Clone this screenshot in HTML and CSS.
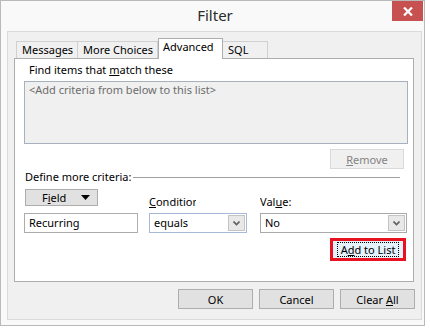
FILE: index.html
```html
<!DOCTYPE html>
<html>
<head>
<meta charset="utf-8">
<link rel="stylesheet" href="styles.css">
</head>
<body>
<div class="window">
  <div class="titlebar">
    <span class="title">Filter</span>
    <span class="close"><svg width="10" height="9" viewBox="0 0 10 9"><path d="M1 0.5 L9 8.5 M9 0.5 L1 8.5" stroke="#fff" stroke-width="2.2"/></svg></span>
  </div>
  <div class="client">
    <div class="tabs">
      <div class="tab t-msg">Messages</div>
      <div class="tab t-more">More Choices</div>
      <div class="tab t-adv active">Advanced</div>
      <div class="tab t-sql">SQL</div>
    </div>
    <div class="pane">
      <div class="find-label">Find items that <u>m</u>atch these</div>
      <div class="listbox">&lt;Add criteria from below to this list&gt;</div>
      <div class="remove-row"><div class="btn disabled remove"><span><u>R</u>emove</span></div></div>
      <div class="define-row"><span class="define-label">Define more criteria:</span><span class="rule"></span></div>
      <div class="criteria">
        <div class="btn field-btn"><span>F<u>i</u>eld</span><svg width="9" height="5" viewBox="0 0 9 5"><path d="M0 0 H9 L4.5 5 Z" fill="#000"/></svg></div>
        <div class="crit-label cond-label"><u>C</u>ondition</div>
        <div class="crit-label value-label">Val<u>u</u>e:</div>
        <div class="textbox">Recurring</div>
        <div class="combo focus"><span class="combo-text">equals</span><span class="drop"><svg width="7" height="5" viewBox="0 0 7 5"><path d="M0.5 0.5 L3.5 3.5 L6.5 0.5" stroke="#606060" stroke-width="1.6" fill="none"/></svg></span></div>
        <div class="combo"><span class="combo-text">No</span><span class="drop"><svg width="7" height="5" viewBox="0 0 7 5"><path d="M0.5 0.5 L3.5 3.5 L6.5 0.5" stroke="#606060" stroke-width="1.6" fill="none"/></svg></span></div>
      </div>
      <div class="add-row">
        <div class="highlight"><div class="btn add-btn"><span class="focus-rect">A<u>d</u>d to List</span></div></div>
      </div>
    </div>
    <div class="footer">
      <div class="btn foot-btn"><span>OK</span></div>
      <div class="btn foot-btn"><span>Cancel</span></div>
      <div class="btn foot-btn"><span>Clear <u>A</u>ll</span></div>
    </div>
  </div>
</div>
</body>
</html>
```
FILE: styles.css
```css
* { box-sizing: border-box; }
html, body { margin: 0; padding: 0; background: #ffffff; }
body {
  font-family: "Segoe UI", "Noto Sans", "Open Sans", sans-serif;
  font-size: 11px;
  color: #000;
}
u { text-decoration: underline; text-underline-offset: 1px; }

.window {
  width: 425px;
  height: 326px;
  border: 1px solid #b9b9b9;
  background: #f9f9f9;
}

.titlebar {
  height: 30px;
  display: grid;
  grid-template-columns: 1fr auto 1fr;
}
.title {
  grid-column: 2;
  font-size: 15px;
  color: #2b2b2b;
  line-height: 28px;
  padding-left: 5px;
}
.close {
  grid-column: 3;
  justify-self: end;
  align-self: start;
  width: 31px;
  height: 20px;
  margin-right: 1px;
  background: #c75050;
  display: flex;
  align-items: center;
  justify-content: center;
}

.client {
  margin-left: 6px;
  width: 415px;
  height: 289px;
  border: 1px solid #dadada;
  background: #f0f0f0;
  padding: 6px 0 0 6px;
}

.tabs {
  display: flex;
  align-items: flex-end;
  height: 20px;
  margin-left: 2px;
}
.tab {
  height: 17px;
  border: 1px solid #d0d0d0;
  border-bottom: none;
  background: #f0f0f0;
  line-height: 16px;
  padding-left: 5px;
  white-space: nowrap;
}
.t-msg { width: 62px; }
.t-more { width: 80px; border-left: none; }
.t-adv { width: 65px; }
.t-sql { width: 45px; border-left: none; }
.tab.active {
  height: 21px;
  margin-bottom: -1px;
  background: #ffffff;
  border-color: #adadad;
  position: relative;
  z-index: 1;
  line-height: 16px;
  padding-left: 4px;
}

.pane {
  width: 400px;
  height: 224px;
  border: 1px solid #adadad;
  background: #ffffff;
  padding: 3px 6px 0 9px;
}
.find-label {
  margin-left: 5px;
  line-height: 15px;
  height: 15px;
}
.listbox {
  margin-top: 4px;
  width: 384px;
  height: 63px;
  border: 1px solid #a7b0bd;
  background: #f0f0f0;
  color: #6d6d6d;
  padding: 1px 0 0 4px;
  line-height: 14px;
}

.btn {
  background: #e1e1e1;
  border: 1px solid #adadad;
  display: flex;
  align-items: center;
  justify-content: center;
  white-space: nowrap;
}
.btn.disabled {
  background: #f0f0f0;
  border-color: #d9d9d9;
  color: #838383;
}
.remove-row {
  display: flex;
  justify-content: flex-end;
  margin-top: 5px;
  padding-right: 3px;
}
.remove { width: 74px; height: 20px; }

.define-row {
  display: flex;
  align-items: center;
  margin-top: 1px;
  height: 13px;
  padding-right: 7px;
}
.define-label { margin-left: 1px; line-height: 13px; }
.rule { flex: 1; border-top: 1px solid #a0a0a0; margin-left: 2px; margin-top: 1px; }

.criteria {
  margin-top: 6px;
  display: grid;
  grid-template-columns: 114px 11px 98px 13px 147px;
  grid-template-rows: 20px 20px;
  row-gap: 4px;
}
.field-btn {
  grid-column: 1; grid-row: 1;
  align-self: start;
  width: 73px;
  height: 17px;
  margin-left: 1px;
  justify-content: flex-start;
  padding-left: 16px;
  gap: 15px;
}
.crit-label {
  grid-row: 1;
  align-self: end;
  line-height: 15px;
  white-space: nowrap;
  overflow: hidden;
}
.cond-label { grid-column: 3; width: 47px; }
.value-label { grid-column: 5; }

.textbox {
  grid-column: 1; grid-row: 2;
  height: 20px;
  border: 1px solid #acacac;
  background: #fff;
  padding-left: 4px;
  line-height: 17px;
}
.combo {
  grid-row: 2;
  grid-column: 5;
  height: 20px;
  border: 1px solid #a9a9a9;
  background: #fff;
  display: flex;
  align-items: stretch;
  padding: 1px;
}
.combo.focus { grid-column: 3; border-color: #a6b9d8; }
.combo-text { flex: 1; padding-left: 3px; line-height: 16px; }
.drop {
  width: 17px;
  background: #e8e8e8;
  border: 1px solid #c4c4c4;
  display: flex;
  align-items: center;
  justify-content: center;
}

.add-row {
  display: flex;
  justify-content: flex-end;
  margin-top: 5px;
  padding-right: 1px;
}
.highlight {
  border: 3px solid #e8111f;
  width: 76px;
  height: 23px;
}
.add-btn {
  width: 100%;
  height: 100%;
  background: #e5f1fb;
  border: 1px solid #e5f1fb;
}
.focus-rect {
  outline: 1px dotted #000;
  padding: 0 3px;
  line-height: 13px;
}

.footer {
  display: flex;
  justify-content: flex-end;
  gap: 6px;
  margin-top: 7px;
  padding-right: 6px;
}
.foot-btn { width: 75px; height: 20px; }
```
